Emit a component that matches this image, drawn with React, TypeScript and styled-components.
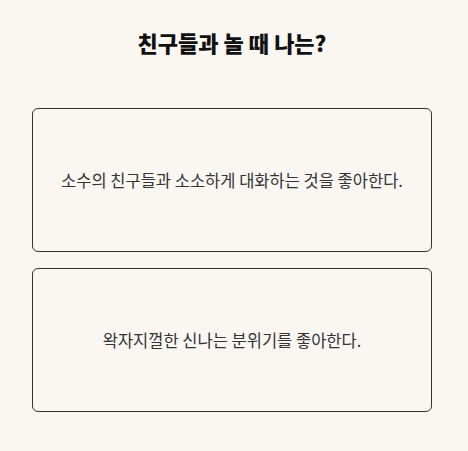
import React from 'react'
import styled, { createGlobalStyle } from 'styled-components'

const GlobalStyle = createGlobalStyle`
  html, body {
    margin: 0;
    padding: 0;
    background: #faf7f3;
  }
  body {
    font-family: 'Noto Sans CJK KR', 'Noto Sans', sans-serif;
    color: #333;
  }
`

const Page = styled.div`
  display: flex;
  flex-direction: column;
  align-items: center;
  width: 464px;
  min-height: 451px;
  padding-top: 26px;
  box-sizing: border-box;
`

const Title = styled.h1`
  margin: 0 0 50px;
  font-size: 22px;
  font-weight: 900;
  line-height: 32px;
  color: #111;
`

const Options = styled.div`
  display: flex;
  flex-direction: column;
  gap: 16px;
`

const Option = styled.button`
  display: flex;
  align-items: center;
  justify-content: center;
  width: 400px;
  height: 144px;
  padding: 0 16px;
  box-sizing: border-box;
  background: transparent;
  border: 1px solid #333;
  border-radius: 6px;
  font-family: 'Noto Sans CJK KR', 'Noto Sans', sans-serif;
  font-size: 16.5px;
  color: #333;
  cursor: pointer;
`

const options = [
  '소수의 친구들과 소소하게 대화하는 것을 좋아한다.',
  '왁자지껄한 신나는 분위기를 좋아한다.'
]

const App = () => {
  return (
    <>
      <GlobalStyle />
      <Page>
        <Title>친구들과 놀 때 나는?</Title>
        <Options>
          {options.map((text) => (
            <Option key={text}>{text}</Option>
          ))}
        </Options>
      </Page>
    </>
  )
}

export default App
